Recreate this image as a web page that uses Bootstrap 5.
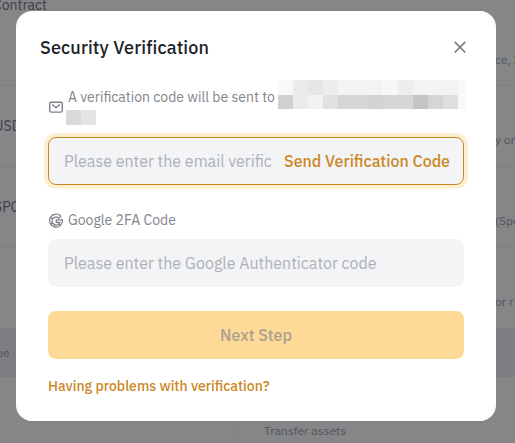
<!DOCTYPE html>
<html lang="en">
<head>
    <meta charset="UTF-8">
    <meta name="viewport" content="width=device-width, initial-scale=1.0">
    <title>Security Verification</title>
    <link href="https://cdn.jsdelivr.net/npm/bootstrap@5.3.0/dist/css/bootstrap.min.css" rel="stylesheet">
    <style>
        body {
            width: 515px;
            height: 443px;
            background: #858688;
            font-family: "IBM Plex Sans", Roboto, "Liberation Sans", sans-serif;
            color: #81858c;
        }
        /* dimmed page behind the dialog */
        .api-row {
            height: 81px;
            flex: none;
            border-bottom: 1px solid #7f8082;
            color: #3e4045;
            font-size: 14px;
            white-space: nowrap;
        }
        .api-row-first { height: 86px; }
        .api-row-first .api-name { margin: -74px 0 0 -7px; }
        .api-row-first .api-desc { margin-top: 35px; }
        .api-row-last { height: 80px; }
        .api-name { margin-left: -6px; }
        .api-desc {
            width: 20px;
            margin-top: 28px;
            font-size: 12px;
            color: #515358;
        }
        .api-head {
            height: 49px;
            flex: none;
            background: #7c7d80;
            font-size: 12px;
            color: #515358;
        }
        .api-head span { margin-left: -4px; }
        .api-foot {
            font-size: 12px;
            color: #515358;
        }
        .api-foot-label {
            width: 236px;
            border-right: 1px solid #828385;
        }
        .foot-text { padding: 45px 0 0 28px; }
        .verify-box {
            left: 16px;
            top: 11px;
            width: 480px;
            height: 410px;
            border-radius: 16px;
            background: #fff;
            padding: 24px 32px;
        }
        .verify-title {
            font-size: 18px;
            line-height: 26px;
            font-weight: 500;
            color: #202227;
            margin-left: -8px;
            letter-spacing: .13px;
        }
        .verify-close { margin-right: -6px; }
        .verify-label {
            font-size: 14px;
            line-height: 21px;
        }
        .email-label { margin-top: 25px; }
        .label-line { height: 21px; }
        .sent-text { padding-top: 1px; }
        .mask-long {
            width: 188px;
            height: 29px;
            margin: -6px 0 0 3px;
        }
        .mask-top {
            height: 15px;
            background: linear-gradient(90deg, #f8f8f8 15px, #ebebeb 15px 30px, #e6e6e6 30px 45px, #ededf0 45px 60px, #f3f3f3 60px 104px, #f7f7f7 104px 120px, #eee 120px 135px, #f3f3f3 135px 180px, #f9f9f9 180px);
        }
        .mask-bottom {
            height: 14px;
            background: linear-gradient(90deg, #d0d0d1 15px, #ebebec 15px 30px, #f2f2f2 30px 45px, #e1e1e4 45px 60px, #d5d5d6 60px 90px, #d3d3d6 90px 105px, #d6d6d6 105px 135px, #c5c5c5 135px 150px, #d5d5d5 150px 165px, #dfdfdf 165px 180px, #f9f9f9 180px);
        }
        .mask-short {
            width: 30px;
            height: 15px;
            margin: 3px 0 0 -2px;
            background: linear-gradient(90deg, #d9d9db 15px, #e4e4e6 15px);
        }
        .code-field {
            height: 48px;
            border: 1px solid #f3f4f6;
            border-radius: 8px;
            background: #f3f4f6;
            padding: 0 13px 0 15px;
        }
        .code-field.active {
            margin-top: 9px;
            border-color: #ca8627;
            box-shadow: 0 0 0 4px #feefd0;
        }
        .code-field input {
            min-width: 0;
            font-size: 16px;
            outline: 0;
        }
        .email-input { margin-right: 12px; }
        .code-field input::placeholder {
            color: #adb1b8;
            opacity: 1;
        }
        .send-code {
            font-size: 16px;
            font-weight: 500;
            color: #cc8726;
            white-space: nowrap;
        }
        .google-label { margin-top: 25px; }
        .next-step, .next-step:disabled {
            height: 48px;
            border: 0;
            border-radius: 8px;
            background: #fdda97;
            color: #aaa08e;
            font-size: 16px;
            font-weight: 500;
            opacity: 1;
        }
        .verify-help {
            font-size: 14px;
            line-height: 22px;
            font-weight: 500;
            color: #cc8726;
        }
    </style>
</head>
<body class="position-relative overflow-hidden">

<div class="d-flex flex-column h-100">
    <div class="api-row api-row-first d-flex align-items-center justify-content-between">
        <span class="api-name">Contract</span><span class="api-desc">ce, I</span>
    </div>
    <div class="api-row d-flex align-items-center justify-content-between">
        <span class="api-name">USD</span><span class="api-desc">y or</span>
    </div>
    <div class="api-row d-flex align-items-center justify-content-between">
        <span class="api-name">SPO</span><span class="api-desc">(Spo</span>
    </div>
    <div class="api-row api-row-last d-flex align-items-center justify-content-end border-0">
        <span class="api-desc">or r</span>
    </div>
    <div class="api-head d-flex align-items-center"><span>pe</span></div>
    <div class="api-foot d-flex flex-grow-1">
        <span class="api-foot-label"></span>
        <span class="foot-text">Transfer assets</span>
    </div>
</div>

<div class="verify-box position-absolute" role="dialog">
    <div class="d-flex justify-content-between align-items-center">
        <h1 class="verify-title mb-0">Security Verification</h1>
        <svg class="verify-close" width="20" height="20" viewBox="0 0 20 20" fill="none" stroke="#777a80" stroke-width="1.600"><path d="M4.700 3.900l10.600 10.600M15.300 3.900L4.700 14.500"/></svg>
    </div>

    <div class="verify-label email-label d-flex align-items-center">
        <svg class="flex-shrink-0 me-1" width="16" height="16" viewBox="0 0 16 16" fill="none" stroke="#7b7f87" stroke-width="1.400" stroke-linejoin="round"><rect x="1.700" y="3.200" width="12.600" height="9.900" rx="1.600"/><path d="M4.200 5.500L8 8.500l3.800-3"/></svg>
        <div>
            <div class="label-line d-flex text-nowrap">
                <span class="sent-text">A verification code will be sent to</span>
                <div class="mask-long"><div class="mask-top"></div><div class="mask-bottom"></div></div>
            </div>
            <div class="label-line d-flex"><div class="mask-short"></div></div>
        </div>
    </div>
    <div class="code-field active d-flex align-items-center">
        <input type="text" class="email-input flex-grow-1 border-0 bg-transparent p-0" placeholder="Please enter the email verification code">
        <span class="send-code">Send Verification Code</span>
    </div>

    <div class="verify-label google-label d-flex align-items-center">
        <svg class="me-1" width="16" height="16" viewBox="0 0 16 16" fill="none" stroke="#777b82" stroke-width="1.200" stroke-linejoin="round"><path d="M12.900 3.200A6.500 6.500 0 1 0 14.500 6.800H8.200v2.500h3.700A4 4 0 1 1 10.900 5.200z"/><path d="M2.300 4.500l2.500 1.600M2.300 11.300l2.500-1.700M10.600 11l2.200 1.700"/></svg>
        <span>Google 2FA Code</span>
    </div>
    <div class="code-field d-flex align-items-center mt-2">
        <input type="text" class="w-100 border-0 bg-transparent p-0" placeholder="Please enter the Google Authenticator code">
    </div>

    <button type="button" class="next-step btn w-100 mt-4" disabled>Next Step</button>
    <div class="verify-help mt-3">Having problems with verification?</div>
</div>

<script src="https://cdn.jsdelivr.net/npm/bootstrap@5.3.0/dist/js/bootstrap.bundle.min.js"></script>
</body>
</html>
